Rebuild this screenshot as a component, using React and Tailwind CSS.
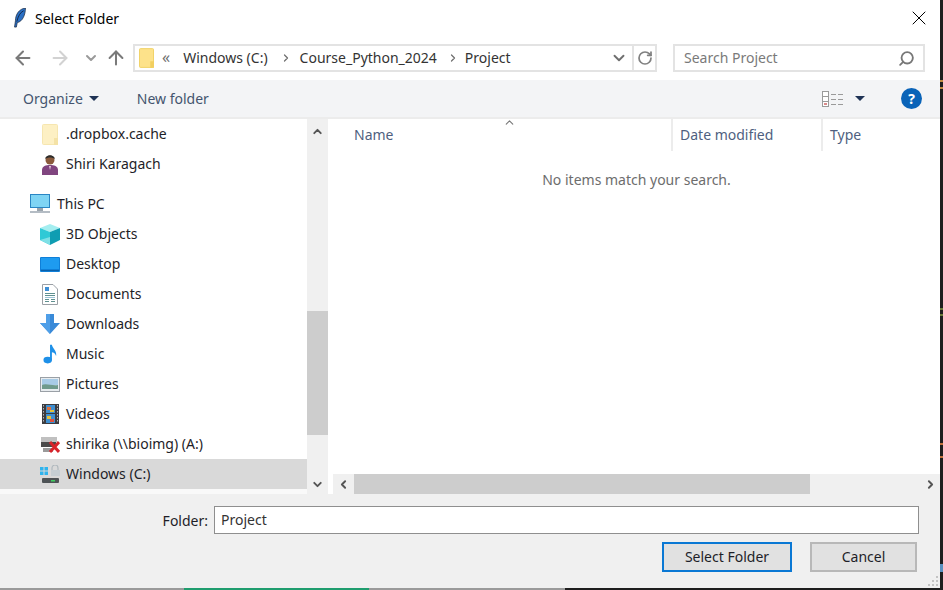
import { ChevronUp, ChevronDown, ChevronLeft, ChevronRight, ArrowLeft, ArrowRight, ArrowUp, RotateCw, Search, X } from 'lucide-react';

function FolderIcon({ light }) {
  return (
    <svg width={light ? 16 : 15} height={light ? 21 : 20} viewBox="0 0 16 21">
      <rect x="0.5" y="0.5" width="15" height="20" rx="1" fill={light ? '#fdf0c4' : '#fde28a'} stroke={light ? '#f6e6b0' : '#f0d060'} />
      <rect x="12" y="14" width="4" height="7" fill={light ? '#f4e2a6' : '#f2cf60'} />
    </svg>
  );
}

function Icon3D() {
  return (
    <svg width="20" height="21" viewBox="0 0 20 21">
      <path d="M10 0 L20 4 L10 8 L0 4 Z" fill="#a5eef0" />
      <path d="M0 4 L10 8 V21 L0 16 Z" fill="#2fc9d6" />
      <path d="M10 8 L20 4 V16 L10 21 Z" fill="#0f9db2" />
      <path d="M0 16 L10 13 L10 21 Z" fill="#7fe0e6" />
    </svg>
  );
}

function UserIcon() {
  return (
    <svg width="16" height="21" viewBox="0 0 16 21">
      <circle cx="8" cy="6" r="4.5" fill="#8a5a3c" />
      <path d="M3 5 C4 0 12 0 13 5 C10 3 6 3 3 5 Z" fill="#2c2c2c" />
      <path d="M0 21 V16 C0 12 4 11 8 11 C12 11 16 12 16 16 V21 Z" fill="#80457f" />
      <path d="M7 12 L8 16 L9 12 Z" fill="#e8d0e0" />
    </svg>
  );
}

function PcIcon() {
  return (
    <svg width="20" height="20" viewBox="0 0 20 20">
      <rect x="0" y="0" width="20" height="14" fill="#2a86c4" />
      <rect x="1" y="1" width="18" height="12" fill="#7fd4f4" />
      <rect x="7" y="14" width="6" height="3" fill="#9aa4ad" />
      <rect x="0" y="17" width="20" height="2" fill="#b4bcc4" />
    </svg>
  );
}

function DesktopIcon() {
  return (
    <svg width="20" height="15" viewBox="0 0 20 15">
      <rect width="20" height="15" rx="1" fill="#0f7fd8" />
      <path d="M1 1 H19 V12 H1 Z" fill="#1e9bf0" />
      <rect x="1" y="13" width="18" height="1" fill="#0a5fa8" />
    </svg>
  );
}

function DocsIcon() {
  return (
    <svg width="16" height="21" viewBox="0 0 16 21">
      <path d="M0.5 0.5 H11 L15.5 5 V20.5 H0.5 Z" fill="#fff" stroke="#9aa0a6" />
      <rect x="3" y="3" width="4" height="4" fill="#3d8fd6" />
      <path d="M3 9.5h10M3 11.5h10M3 15.5h4M9 15.5h4M3 17.5h4M9 17.5h4" stroke="#5f9090" />
      <rect x="3" y="13" width="10" height="1" fill="#9cc4d8" />
    </svg>
  );
}

function DownloadIcon() {
  return (
    <svg width="20" height="20" viewBox="0 0 20 20">
      <path d="M6 0 H14 V9 H20 L10 20 L0 9 H6 Z" fill="#3a8ad8" />
      <path d="M6 0 H10 V20 L0 9 H6 Z" fill="#4f9fe8" />
    </svg>
  );
}

function MusicIcon() {
  return (
    <svg width="15" height="20" viewBox="0 0 16 20">
      <ellipse cx="5" cy="16.5" rx="4.5" ry="3.5" fill="#1e90e8" />
      <path d="M7.5 0 H9.5 C10 4 15 6 14 12 C13 9 11 8 9.5 8 V17 H7.5 Z" fill="#1e90e8" />
    </svg>
  );
}

function PicturesIcon() {
  return (
    <svg width="20" height="15" viewBox="0 0 20 15">
      <rect x="0.5" y="0.5" width="19" height="14" fill="#e8ecef" stroke="#9aa0a6" />
      <rect x="2" y="2" width="16" height="6" fill="#a8cbe6" />
      <path d="M2 8 C6 6 12 9 18 8 V12 H2 Z" fill="#6f9a8c" />
    </svg>
  );
}

function VideosIcon() {
  return (
    <svg width="17" height="20" viewBox="0 0 17 20">
      <rect width="17" height="20" fill="#3c3c40" />
      <path d="M1.5 1v18M15.5 1v18" stroke="#b4b4b4" strokeDasharray="1.5 1.5" />
      <rect x="4" y="1" width="9" height="8" fill="#3f8fd0" />
      <rect x="4" y="10" width="9" height="9" fill="#3f8fd0" />
      <rect x="5" y="3" width="4" height="3" fill="#e0703c" />
      <rect x="8" y="6" width="4" height="2" fill="#e6c33a" />
      <rect x="5" y="12" width="4" height="3" fill="#e6c33a" />
      <rect x="8" y="15" width="4" height="3" fill="#e0503c" />
    </svg>
  );
}

function NetworkDriveIcon() {
  return (
    <svg width="20" height="20" viewBox="0 0 20 20">
      <rect x="1" y="3" width="16" height="5" fill="#c0c0c0" />
      <rect x="1" y="8" width="15" height="5" fill="#4a4a4a" />
      <rect x="3" y="14" width="10" height="4" fill="#9a9a9a" />
      <path d="M10 8 L19 18 M19 8 L10 18" stroke="#d8232a" strokeWidth="3" />
    </svg>
  );
}

function WindowsDriveIcon() {
  return (
    <svg width="20" height="19" viewBox="0 0 20 19">
      <rect x="0" y="2" width="3.5" height="3.5" fill="#2fb4ee" />
      <rect x="4.5" y="2" width="3.5" height="3.5" fill="#2fb4ee" />
      <rect x="0" y="6.5" width="3.5" height="3.5" fill="#2fb4ee" />
      <rect x="4.5" y="6.5" width="3.5" height="3.5" fill="#2fb4ee" />
      <path d="M12 5 V3 a3 3 0 0 1 6 0 V5" fill="none" stroke="#b0b8bd" strokeWidth="1.2" />
      <rect x="11" y="5" width="9" height="6" fill="#c6ced3" />
      <rect x="2" y="13" width="17" height="5" rx="1" fill="#4e5356" />
      <rect x="11" y="15" width="4" height="1.5" fill="#3fcf5f" />
    </svg>
  );
}

function NavRow({ icon, label, indent, selected }) {
  return (
    <div className={`h-[30px] flex items-center shrink-0 ${selected ? 'bg-[#d9d9d9]' : ''} ${indent ? 'pl-[40px]' : 'pl-[30px]'}`}>
      <div className="w-[20px] h-[22px] flex items-center justify-center shrink-0">{icon}</div>
      <span className={`${indent ? 'ml-[6px]' : 'ml-[7px]'} pb-[2px] text-[14px] text-[#1e1e28] whitespace-nowrap`}>{label}</span>
    </div>
  );
}

export default function App() {
  return (
    <div className="w-[943px] h-[590px] bg-white overflow-hidden flex flex-col relative" style={{ fontFamily: '"Noto Sans", sans-serif' }}>
      {/* title bar */}
      <div className="h-[36px] flex items-center pl-[13px] pr-[12px] shrink-0">
        <svg width="14" height="20" viewBox="0 0 14 22">
          <path d="M13 0 C6 1 2 7 2 14 L1 21 L3 21 L4 16 C10 15 13 7 13 0 Z" fill="#2a6fc4" stroke="#1c2a40" strokeWidth="0.8" />
          <path d="M11 3 C7 5 5 9 3.5 15" stroke="#12233f" fill="none" />
        </svg>
        <span className="ml-[8px] text-[14px] text-black">Select Folder</span>
        <X className="ml-auto text-black" size={24} strokeWidth={1} />
      </div>

      {/* address row */}
      <div className="h-[44px] flex items-center shrink-0 pl-[12px] pr-[18px]">
        <ArrowLeft size={22} className="text-[#7a7a7a] shrink-0" strokeWidth={2.2} />
        <ArrowRight size={22} className="ml-[15px] text-[#d2d2d2] shrink-0" strokeWidth={2.2} />
        <ChevronDown size={16} className="ml-[12px] text-[#9a9a9a] shrink-0" strokeWidth={3} />
        <ArrowUp size={22} className="ml-[6px] text-[#7a7a7a] shrink-0" strokeWidth={2.2} />
        <div className="ml-[6px] w-[524px] h-[28px] border-2 border-[#e3e3e3] flex items-center pl-[4px]">
          <FolderIcon />
          <span className="ml-[8px] pb-[2px] text-[16px] text-[#6f6f6f]">«</span>
          <span className="ml-[13px] pb-[1px] text-[14px] text-[#333]">Windows (C:)</span>
          <ChevronRight size={12} className="ml-[12px] text-[#6f6f6f]" strokeWidth={2.5} />
          <span className="ml-[8px] pb-[1px] text-[14px] text-[#333]">Course_Python_2024</span>
          <ChevronRight size={12} className="ml-[10px] text-[#6f6f6f]" strokeWidth={2.5} />
          <span className="ml-[6px] pb-[1px] text-[14px] text-[#333]">Project</span>
          <ChevronDown size={18} className="ml-auto mr-[1px] text-[#6f6f6f]" strokeWidth={2.5} />
          <div className="ml-[3px] w-[23px] h-full border-l-2 border-[#e3e3e3] flex items-center justify-center">
            <RotateCw size={16} className="text-[#808080]" strokeWidth={2.6} />
          </div>
        </div>
        <div className="ml-[16px] w-[252px] h-[28px] border-2 border-[#e3e3e3] flex items-center pl-[9px] pr-[8px]">
          <span className="pb-[1px] text-[14px] text-[#7a7a7a]">Search Project</span>
          <Search size={17} className="ml-auto text-[#777] -scale-x-100" strokeWidth={2.6} />
        </div>
      </div>

      {/* toolbar */}
      <div className="h-[39px] bg-[#f3f4f6] border-b-2 border-[#ececec] flex items-center shrink-0 pl-[23px] pr-[21px]">
        <span className="text-[14px] text-[#44546f]">Organize</span>
        <span className="ml-[6px] w-0 h-0 border-x-[5px] border-x-transparent border-t-[5px] border-t-[#1f3355]"></span>
        <span className="ml-[38px] text-[14px] text-[#44546f]">New folder</span>
        <svg className="ml-auto" width="21" height="16" viewBox="0 0 21 16">
          <rect x="0.5" y="0.5" width="6" height="15" fill="#fff" stroke="#9a9a9a" />
          <path d="M0 5.5h7M0 10.5h7M9 3.5h5M16 3.5h5M9 8.5h5M16 8.5h5M9 13.5h5M16 13.5h5" stroke="#9a9a9a" />
          <rect x="2" y="12" width="3" height="2" fill="#d98a8a" />
        </svg>
        <span className="ml-[12px] w-0 h-0 border-x-[5px] border-x-transparent border-t-[5px] border-t-[#1f3355]"></span>
        <div className="ml-[36px] w-[21px] h-[21px] rounded-full bg-[#0a63b8] flex items-center justify-center text-white text-[14px] font-bold">?</div>
      </div>

      {/* main panes */}
      <div className="flex h-[375px] shrink-0">
        <div className="w-[307px] flex flex-col overflow-hidden shrink-0 bg-[#f9f9f9]">
          <div className="bg-white flex flex-col">
            <NavRow indent icon={<FolderIcon light />} label=".dropbox.cache" />
            <NavRow indent icon={<UserIcon />} label="Shiri Karagach" />
            <div className="h-[10px] shrink-0"></div>
            <NavRow icon={<PcIcon />} label="This PC" />
            <NavRow indent icon={<Icon3D />} label="3D Objects" />
            <NavRow indent icon={<DesktopIcon />} label="Desktop" />
            <NavRow indent icon={<DocsIcon />} label="Documents" />
            <NavRow indent icon={<DownloadIcon />} label="Downloads" />
            <NavRow indent icon={<MusicIcon />} label="Music" />
            <NavRow indent icon={<PicturesIcon />} label="Pictures" />
            <NavRow indent icon={<VideosIcon />} label="Videos" />
            <NavRow indent icon={<NetworkDriveIcon />} label="shirika (\\bioimg) (A:)" />
            <NavRow indent selected icon={<WindowsDriveIcon />} label="Windows (C:)" />
          </div>
        </div>

        {/* nav scrollbar */}
        <div className="w-[21px] bg-[#f0f0f0] flex flex-col items-center shrink-0">
          <div className="h-[20px] flex items-center justify-center shrink-0 mt-[2px]">
            <ChevronUp size={13} className="text-[#555]" strokeWidth={3.5} />
          </div>
          <div className="mt-[170px] w-full h-[124px] bg-[#cdcdcd] shrink-0"></div>
          <div className="mt-auto h-[20px] flex items-center justify-center shrink-0">
            <ChevronDown size={13} className="text-[#555]" strokeWidth={3.5} />
          </div>
        </div>
        <div className="w-[2px] shrink-0"></div>

        {/* file list */}
        <div className="flex-1 flex flex-col relative">
          <ChevronUp size={13} className="absolute left-[173px] top-[-3px] text-[#777]" strokeWidth={2} />
          <div className="h-[32px] flex text-[14px] text-[#4f5f7f] shrink-0">
            <div className="w-[343px] pl-[24px] pb-[2px] border-r-2 border-[#ececec] flex items-center">Name</div>
            <div className="w-[150px] pl-[7px] pb-[2px] border-r-2 border-[#ececec] flex items-center">Date modified</div>
            <div className="pl-[7px] pb-[2px] flex items-center">Type</div>
          </div>
          <div className="mt-[18px] text-center text-[14px] text-[#6d6d6d]">No items match your search.</div>
          <div className="mt-auto ml-[3px] h-[20px] bg-[#f0f0f0] flex items-center shrink-0">
            <div className="w-[21px] flex items-center justify-center">
              <ChevronLeft size={13} className="text-[#555]" strokeWidth={3.5} />
            </div>
            <div className="w-[456px] h-full bg-[#cdcdcd]"></div>
            <div className="ml-auto mr-[5px] w-[16px] flex items-center justify-center">
              <ChevronRight size={13} className="text-[#555]" strokeWidth={3.5} />
            </div>
          </div>
        </div>
      </div>

      {/* footer */}
      <div className="flex-1 bg-[#f0f0f0] relative">
        <div className="flex items-center mt-[12px] pr-[24px] justify-end">
          <span className="text-[14px] text-[#1e1e28] mr-[6px]">Folder:</span>
          <div className="w-[705px] h-[28px] bg-white border-[1.5px] border-[#8f8f8f] flex items-center pl-[6px] pb-[1px] text-[14px] text-[#333]">Project</div>
        </div>
        <div className="flex justify-end pr-[26px] mt-[8px]">
          <button className="w-[130px] h-[30px] pb-[2px] bg-[#e1e1e1] border-2 border-[#0a78d4] text-[14px] text-[#1e1e28]">Select Folder</button>
          <button className="ml-[18px] w-[107px] h-[30px] pb-[2px] bg-[#e1e1e1] border-2 border-[#b8b8b8] text-[14px] text-[#1e1e28]">Cancel</button>
        </div>
        <svg className="absolute right-[4px] bottom-[1px]" width="12" height="12" viewBox="0 0 12 12">
          <path d="M9 1h2v2H9zM5 5h2v2H5zM9 5h2v2H9zM1 9h2v2H1zM5 9h2v2H5zM9 9h2v2H9z" fill="#c4c4c4" />
        </svg>
      </div>

      {/* desktop behind the dialog */}
      <div className="h-[2px] flex shrink-0">
        <div className="w-[184px] bg-[#9a9a9a]"></div>
        <div className="w-[185px] bg-[#1f9d6e]"></div>
        <div className="w-[196px] bg-[#9a9a9a]"></div>
        <div className="flex-1 bg-[#1e1e1e]"></div>
      </div>
      <div className="absolute right-0 top-0 bottom-0 w-[3px] bg-[#1e1e1e]">
        <span className="absolute left-0 top-[80px] w-full h-[2px] bg-[#c08a40]"></span>
        <span className="absolute left-0 top-[87px] w-full h-[2px] bg-[#c08a40]"></span>
        <span className="absolute left-0 top-[308px] w-full h-[2px] bg-[#6a7a3a]"></span>
        <span className="absolute left-0 top-[314px] w-full h-[2px] bg-[#6a7a3a]"></span>
        <span className="absolute left-0 top-[443px] w-full h-[2px] bg-[#c0703c]"></span>
        <span className="absolute left-0 top-[456px] w-full h-[2px] bg-[#c0703c]"></span>
        <span className="absolute left-0 top-[564px] w-full h-[8px] bg-[#5a90c0]"></span>
      </div>
    </div>
  );
}
